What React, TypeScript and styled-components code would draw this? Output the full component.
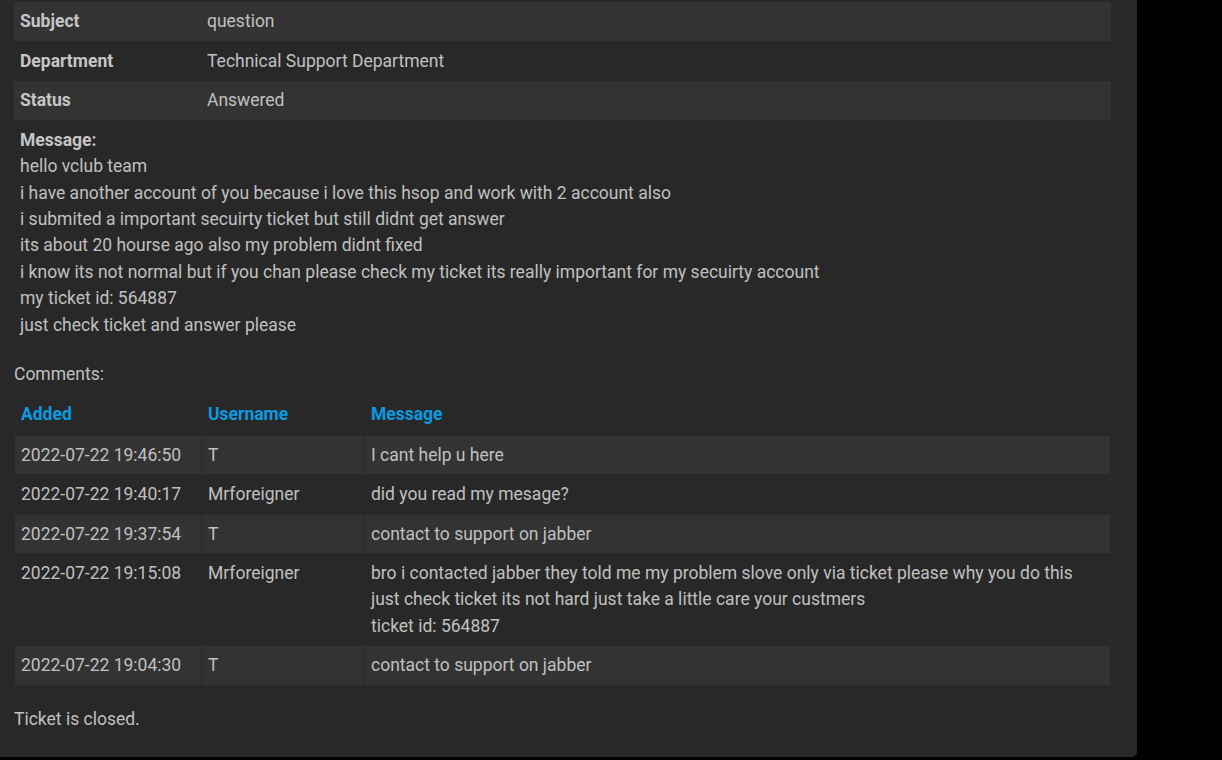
import React from 'react';
import styled, { createGlobalStyle } from 'styled-components';

const GlobalStyle = createGlobalStyle`
  html, body {
    margin: 0;
    padding: 0;
    background: #000;
  }
  body {
    font-family: Roboto, "Noto Sans", Arial, sans-serif;
    font-size: 17.5px;
    line-height: 26.4px;
    color: #c0c0c0;
  }
`;

const Panel = styled.div`
  width: 1137px;
  box-sizing: border-box;
  background: #282828;
  border-bottom-right-radius: 5px;
  padding: 2px 26px 25px 14px;
`;

const InfoTable = styled.table`
  width: 100%;
  border-collapse: collapse;
  border-spacing: 0;
`;

const InfoRow = styled.tr<{ $striped?: boolean }>`
  background: ${(p) => (p.$striped ? '#333333' : 'transparent')};
  height: 39.4px;
`;

const InfoLabel = styled.th`
  width: 175px;
  text-align: left;
  font-weight: 700;
  padding: 6px 6px;
  color: #c6c6c6;
`;

const InfoValue = styled.td`
  padding: 6px 6px;
`;

const MessageBlock = styled.div`
  padding: 8px 6px 0;
`;

const MessageTitle = styled.div`
  font-weight: 700;
  color: #c6c6c6;
  line-height: 25px;
`;

const SectionText = styled.div<{ $top: number }>`
  margin-top: ${(p) => p.$top}px;
`;

const CommentTable = styled.table`
  width: 100%;
  margin-top: 7px;
  border-collapse: collapse;
  border-spacing: 0;

  th, td {
    border: 1px solid #282828;
    padding: 6px 6px;
    text-align: left;
    vertical-align: top;
  }

  th {
    color: #0a9be0;
    font-weight: 700;
    padding-bottom: 7px;
  }
`;

const CommentRow = styled.tr<{ $striped?: boolean }>`
  background: ${(p) => (p.$striped ? '#333333' : 'transparent')};
`;

const info = [
  { label: 'Subject', value: 'question' },
  { label: 'Department', value: 'Technical Support Department' },
  { label: 'Status', value: 'Answered' },
];

const messageLines = [
  'hello vclub team',
  'i have another account of you because i love this hsop and work with 2 account also',
  'i submited a important secuirty ticket but still didnt get answer',
  'its about 20 hourse ago also my problem didnt fixed',
  'i know its not normal but if you chan please check my ticket its really important for my secuirty account',
  'my ticket id: 564887',
  'just check ticket and answer please',
];

const comments = [
  { added: '2022-07-22 19:46:50', user: 'T', text: ['I cant help u here'] },
  { added: '2022-07-22 19:40:17', user: 'Mrforeigner', text: ['did you read my mesage?'] },
  { added: '2022-07-22 19:37:54', user: 'T', text: ['contact to support on jabber'] },
  {
    added: '2022-07-22 19:15:08',
    user: 'Mrforeigner',
    text: [
      'bro i contacted jabber they told me my problem slove only via ticket please why you do this',
      'just check ticket its not hard just take a little care your custmers',
      'ticket id: 564887',
    ],
  },
  { added: '2022-07-22 19:04:30', user: 'T', text: ['contact to support on jabber'] },
];

const App = () => {
  return (
    <>
      <GlobalStyle />
      <Panel>
        <InfoTable>
          <tbody>
            {info.map((row, i) => (
              <InfoRow key={row.label} $striped={i % 2 === 0}>
                <InfoLabel>{row.label}</InfoLabel>
                <InfoValue>{row.value}</InfoValue>
              </InfoRow>
            ))}
          </tbody>
        </InfoTable>

        <MessageBlock>
          <MessageTitle>Message:</MessageTitle>
          {messageLines.map((line, i) => (
            <div key={i}>{line}</div>
          ))}
        </MessageBlock>

        <SectionText $top={23}>Comments:</SectionText>

        <CommentTable>
          <colgroup>
            <col style={{ width: 187 }} />
            <col style={{ width: 163 }} />
            <col />
          </colgroup>
          <thead>
            <tr>
              <th>Added</th>
              <th>Username</th>
              <th>Message</th>
            </tr>
          </thead>
          <tbody>
            {comments.map((c, i) => (
              <CommentRow key={c.added} $striped={i % 2 === 0}>
                <td>{c.added}</td>
                <td>{c.user}</td>
                <td>
                  {c.text.map((t, j) => (
                    <div key={j}>{t}</div>
                  ))}
                </td>
              </CommentRow>
            ))}
          </tbody>
        </CommentTable>

        <SectionText $top={20}>Ticket is closed.</SectionText>
      </Panel>
    </>
  );
};

export default App;
